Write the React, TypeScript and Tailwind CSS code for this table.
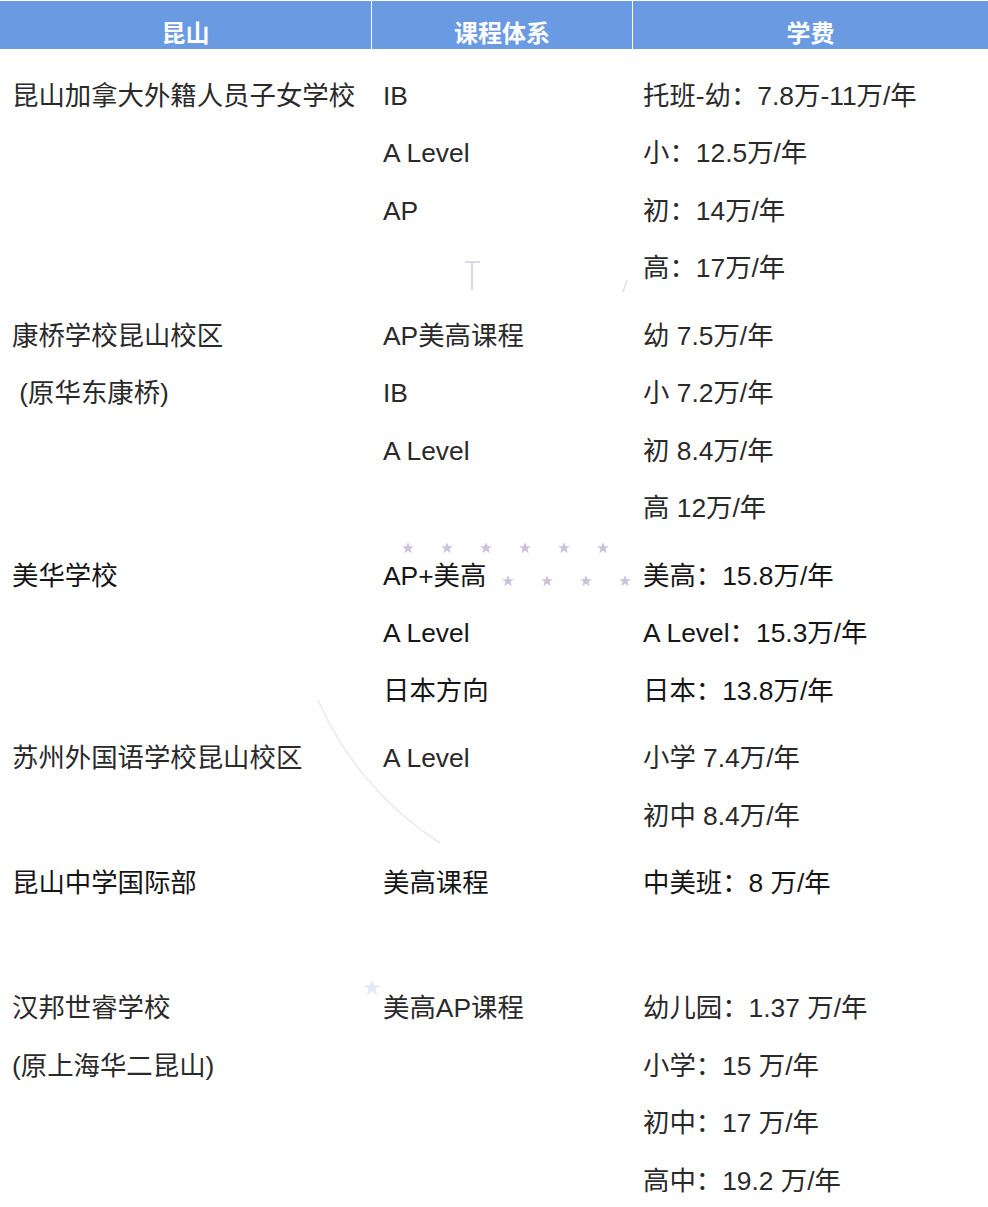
import React from "react";

type Row = {
  name: string[];
  course: string[];
  fee: string[];
  lines?: number;
  dark?: boolean;
};

const rows: Row[] = [
  {
    name: ["昆山加拿大外籍人员子女学校"],
    course: ["IB", "A Level", "AP"],
    fee: ["托班-幼：7.8万-11万/年", "小：12.5万/年", "初：14万/年", "高：17万/年"],
  },
  {
    name: ["康桥学校昆山校区", "\u00a0(原华东康桥)"],
    course: ["AP美高课程", "IB", "A Level"],
    fee: ["幼 7.5万/年", "小 7.2万/年", "初 8.4万/年", "高 12万/年"],
  },
  {
    name: ["美华学校"],
    course: ["AP+美高", "A Level", "日本方向"],
    fee: ["美高：15.8万/年", "A Level：15.3万/年", "日本：13.8万/年"],
    dark: true,
  },
  {
    name: ["苏州外国语学校昆山校区"],
    course: ["A Level"],
    fee: ["小学 7.4万/年", "初中 8.4万/年"],
  },
  {
    name: ["昆山中学国际部"],
    course: ["美高课程"],
    fee: ["中美班：8 万/年"],
    lines: 2,
    dark: true,
  },
  {
    name: ["汉邦世睿学校", "(原上海华二昆山)"],
    course: ["美高AP课程"],
    fee: ["幼儿园：1.37 万/年", "小学：15 万/年", "初中：17 万/年", "高中：19.2 万/年"],
  },
];

const starPath =
  "M0 -9 L2.6 -2.8 L9 -2.8 L3.9 1.2 L5.6 8 L0 4 L-5.6 8 L-3.9 1.2 L-9 -2.8 L-2.6 -2.8 Z";

function Star({ x, y }: { x: number; y: number }) {
  return <path transform={`translate(${x} ${y}) scale(0.65)`} d={starPath} fill="#cdc2de" />;
}

// faint background watermark
function Watermark() {
  const top = [408, 447, 486, 525, 564, 603];
  const bottom = [508, 547, 586, 625];
  return (
    <svg
      className="pointer-events-none absolute left-0 top-0"
      width="988"
      height="1207"
      viewBox="0 0 988 1207"
    >
      <path
        d="M 318 700 A 325 325 0 0 0 440 843"
        fill="none"
        stroke="#e6eaf4"
        strokeWidth="1.5"
      />
      <path d="M 465 262 L 480 262 M 472 262 L 472 290" stroke="#dcd8ea" strokeWidth="2" />
      <path d="M 627 280 L 623 292" stroke="#e0e0ea" strokeWidth="1.5" />
      {top.map((x) => (
        <Star key={"t" + x} x={x} y={548} />
      ))}
      {bottom.map((x) => (
        <Star key={"b" + x} x={x} y={581} />
      ))}
      <path transform="translate(372 988) scale(0.9)" d={starPath} fill="#e2e8f5" />
    </svg>
  );
}

function Cell({ items, count, pad, color }: { items: string[]; count: number; pad: string; color: string }) {
  const list = Array.from({ length: count }, (_, i) => items[i] ?? "");
  return (
    <div className={`flex flex-col ${pad}`}>
      {list.map((t, i) => (
        <div key={i} className={`flex h-[57.5px] items-center whitespace-nowrap ${color}`}>
          {t}
        </div>
      ))}
    </div>
  );
}

export default function App() {
  return (
    <div
      className="relative h-[1207px] w-[988px] overflow-hidden bg-white text-[26.4px]"
      style={{ fontFamily: '"Liberation Sans", "Noto Sans CJK SC", sans-serif' }}
    >
      <Watermark />
      <div className="relative">
        <div className="mt-px grid h-[48px] grid-cols-[372px_261px_355px] bg-[#6a9be2] text-[24px] font-bold text-white">
          <div className="flex items-center justify-center border-r border-white pt-[15px]">昆山</div>
          <div className="flex items-center justify-center border-r border-white pt-[15px]">课程体系</div>
          <div className="flex items-center justify-center pt-[15px]">学费</div>
        </div>

        <div className="flex flex-col gap-[10px] pt-[19px]">
          {rows.map((r, i) => {
            const count = r.lines ?? Math.max(r.name.length, r.course.length, r.fee.length);
            const color = r.dark ? "text-[#161616]" : "text-[#2a2a2a]";
            return (
              <div key={i} className="grid grid-cols-[372px_261px_355px]">
                <Cell items={r.name} count={count} pad="pl-3" color={color} />
                <Cell items={r.course} count={count} pad="pl-[11px]" color={color} />
                <Cell items={r.fee} count={count} pad="pl-[10px]" color={color} />
              </div>
            );
          })}
        </div>
      </div>
    </div>
  );
}
